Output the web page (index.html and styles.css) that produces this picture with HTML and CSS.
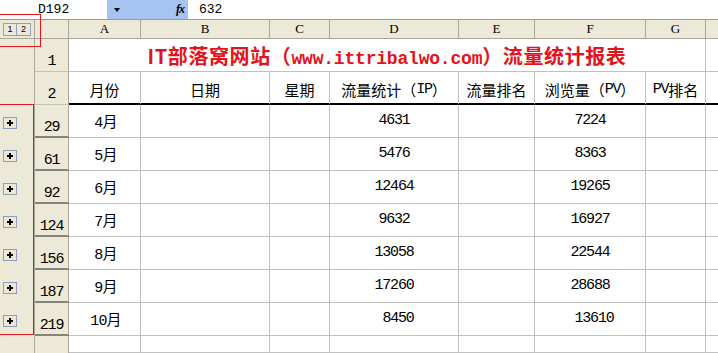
FILE: index.html
```html
<!DOCTYPE html>
<html lang="zh-CN">
<head>
<meta charset="utf-8">
<title>流量统计报表</title>
<link rel="stylesheet" href="styles.css">
</head>
<body>
<div class="app">
  <div class="formula-bar">
    <div class="namebox">D192</div>
    <div class="fx-area"><span class="arrow"></span><span class="fx">fx</span></div>
    <div class="formula">632</div>
  </div>
  <div class="sheet">
    <!-- column header row -->
    <div class="ol ol-head"><span class="lvl">1</span><span class="lvl">2</span></div>
    <div class="corner"></div>
    <div class="ch">A</div><div class="ch">B</div><div class="ch">C</div><div class="ch">D</div><div class="ch">E</div><div class="ch">F</div><div class="ch">G</div><div class="ch ch-last"></div>

    <!-- row 1 -->
    <div class="ol"></div>
    <div class="rh">1</div>
    <div class="cell title"><b>IT部落窝网站（<span class="lat">www.ittribalwo.com</span>）流量统计报表</b></div>
    <div class="cell last"></div>

    <!-- row 2 -->
    <div class="ol"></div>
    <div class="rh">2</div>
    <div class="cell hd">月份</div><div class="cell hd">日期</div><div class="cell hd">星期</div><div class="cell hd">流量统计（<span class="hl">IP</span>）</div><div class="cell hd">流量排名</div><div class="cell hd">浏览量（<span class="hl">PV</span>）</div><div class="cell hd"><span class="hl">PV</span>排名</div><div class="cell hd last"></div>

    <div class="ol"><span class="plus"></span></div><div class="rh grp">29</div>
    <div class="cell m">4月</div><div class="cell"></div><div class="cell"></div><div class="cell num">4631</div><div class="cell"></div><div class="cell num">7224</div><div class="cell"></div><div class="cell last"></div>

    <div class="ol"><span class="plus"></span></div><div class="rh grp">61</div>
    <div class="cell m">5月</div><div class="cell"></div><div class="cell"></div><div class="cell num">5476</div><div class="cell"></div><div class="cell num">8363</div><div class="cell"></div><div class="cell last"></div>

    <div class="ol"><span class="plus"></span></div><div class="rh grp">92</div>
    <div class="cell m">6月</div><div class="cell"></div><div class="cell"></div><div class="cell num">12464</div><div class="cell"></div><div class="cell num">19265</div><div class="cell"></div><div class="cell last"></div>

    <div class="ol"><span class="plus"></span></div><div class="rh grp">124</div>
    <div class="cell m">7月</div><div class="cell"></div><div class="cell"></div><div class="cell num">9632</div><div class="cell"></div><div class="cell num">16927</div><div class="cell"></div><div class="cell last"></div>

    <div class="ol"><span class="plus"></span></div><div class="rh grp">156</div>
    <div class="cell m">8月</div><div class="cell"></div><div class="cell"></div><div class="cell num">13058</div><div class="cell"></div><div class="cell num">22544</div><div class="cell"></div><div class="cell last"></div>

    <div class="ol"><span class="plus"></span></div><div class="rh grp">187</div>
    <div class="cell m">9月</div><div class="cell"></div><div class="cell"></div><div class="cell num">17260</div><div class="cell"></div><div class="cell num">28688</div><div class="cell"></div><div class="cell last"></div>

    <div class="ol"><span class="plus"></span></div><div class="rh grp">219</div>
    <div class="cell m">10月</div><div class="cell"></div><div class="cell"></div><div class="cell num shift">8450</div><div class="cell"></div><div class="cell num shift">13610</div><div class="cell"></div><div class="cell last"></div>

    <div class="ol"></div><div class="rh rh-end"></div>
    <div class="cell"></div><div class="cell"></div><div class="cell"></div><div class="cell"></div><div class="cell"></div><div class="cell"></div><div class="cell"></div><div class="cell last"></div>
  </div>
  <div class="mark-levels"></div>
  <div class="mark-group"></div>
</div>
</body>
</html>
```

FILE: styles.css
```css
* { box-sizing: border-box; }
html, body { margin: 0; padding: 0; background: #fff; }
body { width: 718px; height: 353px; overflow: hidden; }

.app {
  position: relative;
  width: 718px;
  height: 353px;
  display: flex;
  flex-direction: column;
  font-family: "Liberation Mono", "Noto Sans CJK SC", monospace;
  color: #000;
}

/* formula bar */
.formula-bar {
  height: 19px;
  display: flex;
  align-items: stretch;
  background: #fff;
}
.namebox {
  width: 107px;
  padding-left: 38px;
  font-size: 13px;
  line-height: 19px;
}
.fx-area {
  width: 81px;
  background: #a6c3f2;
  display: flex;
  align-items: center;
  justify-content: space-between;
  padding: 0 4px 0 7px;
}
.arrow {
  width: 0;
  height: 0;
  border-left: 3.5px solid transparent;
  border-right: 3.5px solid transparent;
  border-top: 4px solid #000;
  margin-top: 1px;
}
.fx {
  font-family: "Liberation Serif", serif;
  font-style: italic;
  font-weight: bold;
  font-size: 12px;
  letter-spacing: -1px;
}
.formula {
  flex: 1;
  padding-left: 11px;
  font-size: 13px;
  line-height: 19px;
}

/* sheet grid */
.sheet {
  flex: 1;
  display: grid;
  grid-template-columns: 35px 34px 72px 129px 60px 129px 76px 111px 60px 1fr;
  grid-template-rows: 19px 33px 33px repeat(7, 33px) 1fr;
  border-top: 1px solid #9c9a8c;
}

.ol {
  background: #ece9d8;
  border-right: 1px solid #aca899;
  position: relative;
}
.ol-head {
  border-bottom: 1px solid #aca899;
  display: flex;
  padding: 3px 0 0 3px;
  align-items: flex-start;
}
.lvl {
  width: 14px;
  height: 13px;
  border: 1px solid #8e9fb8;
  background: #ece9d8;
  font-family: "Liberation Sans", sans-serif;
  font-size: 9px;
  line-height: 11px;
  text-align: center;
}
.lvl + .lvl { border-left: none; width: 14px; }

.corner {
  background: #ece9d8;
  border-right: 1px solid #aca899;
  border-bottom: 1px solid #aca899;
}
.ch {
  background: #ece9d8;
  border-right: 1px solid #aca899;
  border-bottom: 1px solid #aca899;
  font-family: "Liberation Serif", serif;
  font-size: 13px;
  line-height: 18px;
  text-align: center;
}
.ch-last { border-right: none; }

.rh {
  background: #ece9d8;
  border-right: 1px solid #aca899;
  border-bottom: 1px solid #c5c2b2;
  font-size: 15px;
  letter-spacing: -1.2px;
  display: flex;
  align-items: flex-end;
  justify-content: center;
  padding-bottom: 1px;
}
.rh.grp { border-bottom: 2px solid #86847a; padding-bottom: 0; }
.rh-end { border-bottom: none; }

.cell {
  border-right: 1px solid #c0c0c0;
  border-bottom: 1px solid #c0c0c0;
  display: flex;
  align-items: center;
  justify-content: center;
  font-size: 15px;
  white-space: nowrap;
  background: #fff;
}
.cell.last { border-right: none; }

.title {
  grid-column: 3 / span 7;
  color: #e4121b;
  font-family: "Noto Sans CJK SC", sans-serif;
  font-size: 20px;
  letter-spacing: 0.6px;
}
.title .lat {
  font-family: "Liberation Mono", monospace;
  font-size: 18px;
  letter-spacing: -0.2px;
}

.hd {
  border-bottom: 2px solid #000;
  font-family: "Noto Sans CJK SC", sans-serif;
  font-size: 15px;
  padding-top: 3px;
}
.hd .hl {
  font-family: "Liberation Mono", monospace;
  font-size: 15px;
  letter-spacing: -1.2px;
}

.m {
  font-family: "Liberation Mono", "Noto Sans CJK SC", monospace;
  font-size: 15px;
  letter-spacing: -0.8px;
  padding-left: 2px;
}
.num {
  letter-spacing: -1.2px;
  padding-bottom: 1px;
}
.num.shift { padding-left: 8px; }

.plus {
  position: absolute;
  left: 3px;
  top: 12px;
  width: 14px;
  height: 12px;
  border: 1px solid #8e9fb8;
  background: #ece9d8;
}
.plus::before, .plus::after {
  content: "";
  position: absolute;
  background: #000;
}
.plus::before { left: 3px; top: 4px; width: 6px; height: 2px; }
.plus::after { left: 5px; top: 2px; width: 2px; height: 6px; }

/* red annotation marks over the outline area */
.mark-levels {
  position: absolute;
  left: -1px;
  top: 14px;
  width: 42px;
  height: 33px;
  border: 1px solid #e8141a;
}
.mark-group {
  position: absolute;
  left: -1px;
  top: 104px;
  width: 35px;
  height: 231px;
  border: 1px solid #e8141a;
}
```
